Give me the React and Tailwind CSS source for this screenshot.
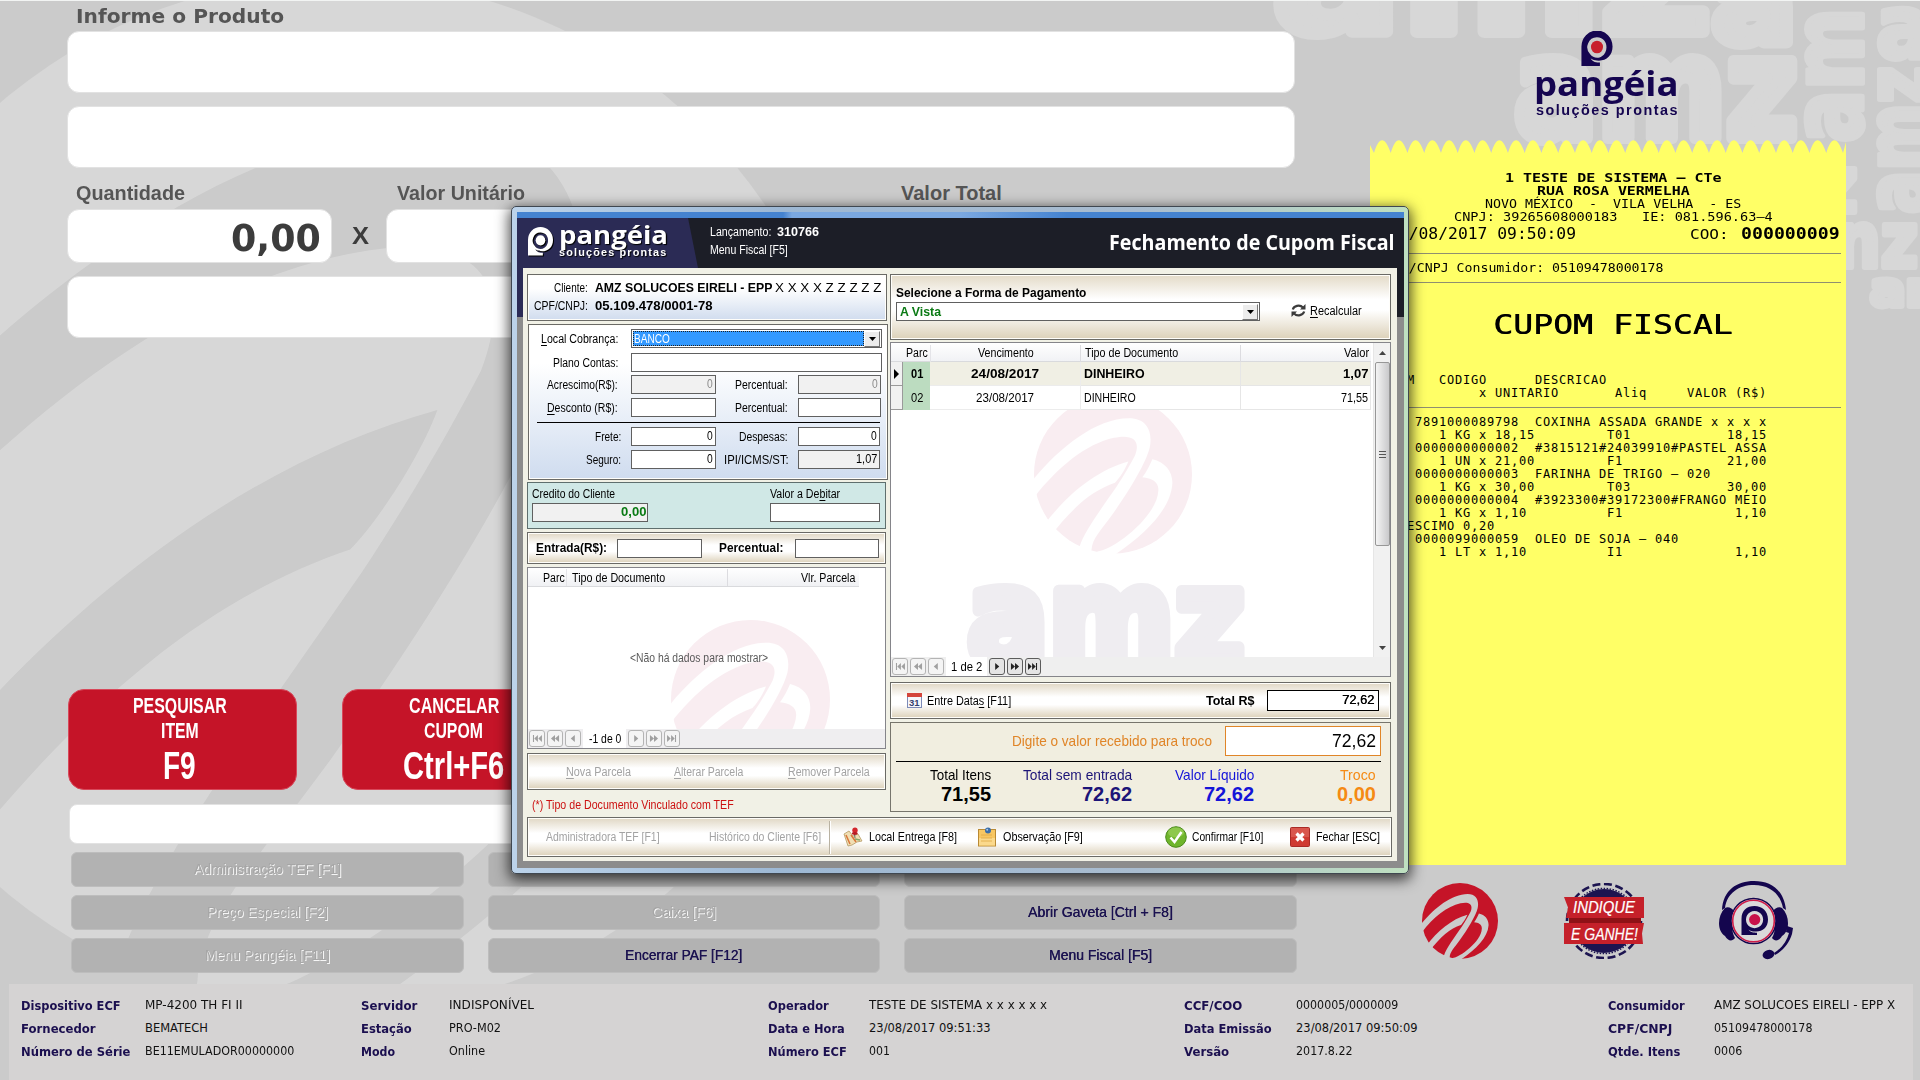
import React, { useLayoutEffect, useRef, useState } from "react";

/* Text set to a fixed width: the glyphs are condensed or widened to fill it. */
function T({ w, className = "", children }) {
  const ref = useRef(null);
  const [k, setK] = useState(1);
  useLayoutEffect(() => {
    const n = ref.current.offsetWidth;
    if (n) setK(w / n);
  }, [w]);
  return (
    <span className={"inline-block shrink-0 whitespace-pre " + className} style={{ width: w }}>
      <span ref={ref} className="inline-block origin-left" style={{ transform: `scaleX(${k})` }}>
        {children}
      </span>
    </span>
  );
}

const U = ({ children }) => <span className="underline underline-offset-2">{children}</span>;

/* Round AMZ emblem with three swooshes cut out of the disc. */
function Emblem({ id, className }) {
  return (
    <svg viewBox="15 -15 474 474" className={className} fill="currentColor">
      <mask id={id}>
        <rect x="0" y="-30" width="520" height="520" fill="white" />
        <path
          fill="black"
          d="M-10 265C70 160 190 53 300 53C355 53 372 95 362 142C350 190 300 272 250 342C215 390 190 415 188 445L182 480L140 475L152 437C165 395 220 320 263 258C285 225 305 190 318 165C336 118 310 100 255 112C170 130 80 205 10 298Z
          M40 380C110 285 200 210 298 183C290 205 270 235 258 247C190 270 130 320 60 413Z
          M370 176C410 185 432 215 430 250C425 330 340 410 240 474L200 470L205 453C250 450 385 350 388 270C390 245 370 233 340 230C352 215 362 195 370 176Z"
        />
      </mask>
      <circle cx="252" cy="222" r="237" mask={`url(#${id})`} />
    </svg>
  );
}

function Backdrop() {
  return (
    <div className="absolute inset-0 overflow-hidden bg-[#cbcbcb] text-[#d7d7d7]">
      <Emblem id="bgm" className="absolute -left-[180px] -top-[22px] h-[1034px] w-[1034px]" />
      <svg
        className="absolute right-0 top-0 h-[330px] w-[680px] font-['DejaVu_Sans'] font-bold"
        viewBox="1240 0 680 330"
        fill="currentColor"
        stroke="currentColor"
        strokeWidth="12"
        strokeLinejoin="round"
      >
        <text x="1272" y="32" fontSize="165" textLength="440" lengthAdjust="spacingAndGlyphs">amz</text>
        <text x="1712" y="42" fontSize="110" textLength="84" lengthAdjust="spacingAndGlyphs">a</text>
        <text x="1514" y="138" fontSize="140" textLength="284" lengthAdjust="spacingAndGlyphs">amz</text>
        <g strokeWidth="6">
          <text transform="translate(1862 143) rotate(-90)" fontSize="98" textLength="135" lengthAdjust="spacingAndGlyphs">am</text>
          <text transform="translate(1928 214) rotate(-90)" fontSize="88" textLength="148" lengthAdjust="spacingAndGlyphs">amz</text>
          <text x="1876" y="58" fontSize="88" textLength="56" lengthAdjust="spacingAndGlyphs">a</text>
          <text x="1835" y="267" fontSize="76" textLength="83" lengthAdjust="spacingAndGlyphs">nz</text>
          <text x="1870" y="306" fontSize="48" textLength="90" lengthAdjust="spacingAndGlyphs">am</text>
          <text x="1816" y="212" fontSize="78" textLength="42" lengthAdjust="spacingAndGlyphs">z</text>
        </g>
      </svg>
      <div className="absolute inset-x-0 top-0 h-px bg-[#f2f4f3]" />
    </div>
  );
}

function PMark({ className, dot = "#c8202c" }) {
  return (
    <svg viewBox="0 0 32 36" className={className}>
      <path
        fill="currentColor"
        fillRule="evenodd"
        d="M0 36V16A16 16.5 0 0 1 32 16C32 25 26 30.5 18 30.5C12 30.5 9.500 28 9.500 28C11 32 16 32.500 19 32.500V36ZM16 6.500A9.800 10.200 0 0 0 9 24C11.500 27.500 17 29 21 26C28 22 28 7 16 6.500Z"
      />
      <ellipse cx="16" cy="16.500" rx="6.200" ry="6.500" fill={dot} />
    </svg>
  );
}

const Field = ({ className = "", children }) => (
  <div className={"flex shrink-0 items-center justify-end rounded-xl border border-[#e2e2e2] bg-white " + className}>{children}</div>
);

function RedButton({ lines }) {
  return (
    <div className="flex h-[101px] w-[229px] shrink-0 flex-col items-center rounded-2xl border border-[#d8485a] bg-[#c51428] pt-[3px] pr-[6px] text-white">
      {lines.map(([t, w], i) => (
        <T key={t} w={w} className={i === 2 ? "h-[46px] text-[39px] leading-[46px] font-bold" : "h-[25px] text-[22px] leading-[25px] font-bold"}>
          {t}
        </T>
      ))}
    </div>
  );
}

function GrayButton({ w, off, children }) {
  return (
    <div className="flex h-[35px] items-center justify-center rounded-md border border-[#bdbdbd] bg-[#b2b2b2]">
      {children && (
        <T
          w={w}
          className={
            off
              ? "text-[15px] text-[#a6a6a6] [text-shadow:1px_1px_0_#f6f6f6]"
              : "text-[15px] text-[#1b1250] [text-shadow:0.4px_0_0_#1b1250]"
          }
        >
          {children}
        </T>
      )}
    </div>
  );
}

function Left() {
  return (
    <div className="w-[1370px] shrink-0 pl-[67px] text-[#555]">
      <div className="flex h-[31px] items-center pl-[9px]">
        <T w={208} className="font-['DejaVu_Sans'] text-[20px] font-bold">Informe o Produto</T>
      </div>
      <Field className="h-[62px] w-[1228px]" />
      <Field className="mt-[13px] h-[62px] w-[1228px]" />
      <div className="mt-[16px] mb-[7px] flex h-[18px] items-center pl-[9px] text-[20px] font-bold">
        <T w={109}>Quantidade</T>
        <T w={128} className="ml-[212px]">Valor Unitário</T>
        <T w={101} className="ml-[376px]">Valor Total</T>
      </div>
      <div className="flex items-center">
        <Field className="h-[54px] w-[265px] pr-[10px] text-[#3c3c3c]">
          <T w={90} className="pt-[3px] font-['DejaVu_Sans'] text-[38px] leading-none font-bold">0,00</T>
        </Field>
        <T w={17} className="ml-[20px] text-[24px] font-bold text-[#3c3c3c]">X</T>
        <Field className="ml-[17px] h-[54px] w-[264px]" />
      </div>
      <Field className="mt-[13px] h-[62px] w-[1228px]" />
      <div className="mt-[351px] ml-px flex gap-[45px]">
        <RedButton lines={[["PESQUISAR", 94], ["ITEM", 38], ["F9", 33]]} />
        <RedButton lines={[["CANCELAR", 90], ["CUPOM", 59], ["Ctrl+F6", 101]]} />
      </div>
      <div className="mt-[14px] ml-[2px] h-[40px] w-[1226px] rounded-lg border border-[#e2e2e2] bg-white" />
      <div className="mt-[8px] ml-[4px] grid w-[1226px] grid-cols-3 gap-x-[24px] gap-y-[8px]">
        <GrayButton off w={147}>Administração TEF [F1]</GrayButton>
        <GrayButton />
        <GrayButton />
        <GrayButton off w={121}>Preço Especial [F2]</GrayButton>
        <GrayButton off w={64}>Caixa [F6]</GrayButton>
        <GrayButton w={145}>Abrir Gaveta [Ctrl + F8]</GrayButton>
        <GrayButton off w={125}>Menu Pangéia [F11]</GrayButton>
        <GrayButton w={117}>Encerrar PAF [F12]</GrayButton>
        <GrayButton w={103}>Menu Fiscal [F5]</GrayButton>
      </div>
    </div>
  );
}

const TEETH = (() => {
  let d = "M0 14V5L4 13";
  for (let i = 0; i < 28; i++) {
    const x = 4 + i * 16.75;
    d += `C${x + 5} -4 ${x + 11} -4 ${x + 16.75} 13`;
  }
  return d + "L476 2V14Z";
})();

const ITEMS = `    7891000089798  COXINHA ASSADA GRANDE x x x x
       1 KG x 18,15         T01            18,15
    0000000000002  #3815121#24039910#PASTEL ASSA
       1 UN x 21,00         F1             21,00
    0000000000003  FARINHA DE TRIGO – 020
       1 KG x 30,00         T03            30,00
    0000000000004  #3923300#39172300#FRANGO MEIO
       1 KG x 1,10          F1              1,10
ACRESCIMO 0,20
    0000099000059  OLEO DE SOJA – 040
       1 LT x 1,10          I1              1,10`;

const HEAD = `ITEM   CODIGO      DESCRICAO
            x UNITARIO       Aliq     VALOR (R$)`;

function Receipt() {
  return (
    <div className="h-[725px] w-[476px] font-['DejaVu_Sans_Mono'] text-black">
      <svg viewBox="0 0 476 13" className="block h-[13px] w-[476px]">
        <path d={TEETH} fill="#ffff66" />
      </svg>
      <div className="h-[712px] bg-[#ffff66] pt-[19px]">
        <div className="flex flex-col items-center text-[12px] leading-[13px] *:h-[13px]">
          <T w={216} className="ml-[10px] font-bold">1 TESTE DE SISTEMA – CTe</T>
          <T w={153} className="ml-[11px] font-bold">RUA ROSA VERMELHA</T>
          <T w={256} className="ml-[10px]">{"NOVO MÉXICO  -  VILA VELHA  - ES"}</T>
          <T w={319} className="ml-[10px]">{"CNPJ: 39265608000183   IE: 081.596.63–4"}</T>
        </div>
        <div className="flex h-[20px] items-center pl-[19px] leading-[20px]">
          <T w={187} className="text-[16px]">23/08/2017 09:50:09</T>
          <T w={39} className="ml-[114px] text-[14px]">COO:</T>
          <T w={99} className="ml-[12px] text-[16px] font-bold">000000009</T>
        </div>
        <div className="mt-[9px] mr-[5px] ml-[10px] h-px bg-[#8f8f70]" />
        <div className="flex h-[28px] items-center pl-[15px]">
          <T w={278} className="text-[12.5px]">CPF/CNPJ Consumidor: 05109478000178</T>
        </div>
        <div className="mr-[5px] ml-[10px] h-px bg-[#8f8f70]" />
        <div className="flex h-[84px] items-center pl-[123px] [text-shadow:0.5px_0_0_#000]">
          <T w={239} className="text-[26.5px]">CUPOM FISCAL</T>
        </div>
        <pre className="mt-[7px] ml-[13px] font-['DejaVu_Sans_Mono'] text-[12px] leading-[13px] tracking-[0.776px]">{HEAD}</pre>
        <div className="mt-[7px] mr-[5px] ml-[10px] h-px bg-[#8f8f70]" />
        <pre className="mt-[8px] ml-[13px] font-['DejaVu_Sans_Mono'] text-[12px] leading-[13px] tracking-[0.776px]">{ITEMS}</pre>
      </div>
    </div>
  );
}

function Indique() {
  return (
    <svg viewBox="0 0 81 76" className="h-[76px] w-[81px]">
      <circle cx="40" cy="38" r="37" fill="none" stroke="#1c1450" strokeWidth="2.600" strokeDasharray="8 3.600" />
      <circle cx="40" cy="38" r="32" fill="#1c1450" />
      <circle cx="40" cy="38" r="32.600" fill="none" stroke="#1c1450" strokeWidth="1.500" strokeDasharray="1.500 1.500" />
      <path d="M5 35H77V42H5Z" fill="#8f1116" />
      <path d="M0 14H80V35H2L4 24.500Z" fill="#c5202a" />
      <path d="M0 40H80L78 50.500L79 61H0Z" fill="#c5202a" />
      <g fill="#fff" fontFamily="Liberation Sans" fontStyle="italic" fontSize="17" stroke="#fff" strokeWidth=".2">
        <text x="9" y="29.500" textLength="62" lengthAdjust="spacingAndGlyphs">INDIQUE</text>
        <text x="7" y="57" textLength="67" lengthAdjust="spacingAndGlyphs">E GANHE!</text>
      </g>
    </svg>
  );
}

function Headset() {
  return (
    <svg viewBox="0 0 75 79" className="h-[79px] w-[75px] text-[#14064e]" fill="currentColor">
      <path d="M3 29C4 9 18 0 35 0S65 9 67 29L64 27C61 12 50 4 35 4S8 12 6 27Z" />
      <path d="M6 27C9 25 13 27 16 31C12 39 12 50 16 57C13 61 9 60 6 55C-2 50-2 35 6 27Z" />
      <path d="M63 27C60 25 56 27 53 31C57 39 57 50 53 57C56 61 60 60 63 55C71 50 71 35 63 27Z" />
      <circle cx="34.500" cy="40" r="22.500" fill="#dadada" stroke="#14064e" strokeWidth="1.500" />
      <circle cx="34.500" cy="40" r="20.800" fill="none" stroke="#cf1c48" strokeWidth="1.600" />
      <path
        fillRule="evenodd"
        d="M22.500 54V38C22.500 29 28 25 35.500 25S49 30 49 38.500S43 51 36 50.500C33 50.500 31 50 29.500 48.500C31 51.500 35 51.500 38 51.800V54ZM35.500 30A8.600 8.600 0 1 0 35.600 30Z"
      />
      <circle cx="35.700" cy="38.600" r="5.600" fill="#c8104a" />
      <path d="M68 45L74 47L73 53C70 62 65 69 56 74L55 72C63 67 68 60 70 52L67 51Z" />
      <ellipse cx="49.500" cy="73.500" rx="6" ry="4.500" transform="rotate(-18 49.500 73.500)" />
    </svg>
  );
}

function Right() {
  return (
    <div className="w-[550px]">
      <div className="flex h-[140px] w-[476px] flex-col items-center pt-[31px] text-[#150550]">
        <PMark className="-ml-[22px] h-[35px] w-[32px]" />
        <T w={145} className="-ml-[3px] h-[35px] font-['Open_Sans'] text-[34px] leading-[35px] font-bold">pangéia</T>
        <T w={143} className="-ml-[2px] h-[18px] text-[14.5px] leading-[18px] font-bold tracking-[1.5px]">soluções prontas</T>
      </div>
      <Receipt />
      <div className="flex items-center pt-[16px] pl-[52px] text-[#c51428]">
        <Emblem id="em" className="h-[76px] w-[76px]" />
        <div className="ml-[66px]"><Indique /></div>
        <div className="ml-[74px]"><Headset /></div>
      </div>
    </div>
  );
}

const FOOT = [
  ["pl-[12px]", "w-[124px]", [["Dispositivo ECF", 100, "MP-4200 TH FI II", 97], ["Fornecedor", 75, "BEMATECH", 63], ["Número de Série", 109, "BE11EMULADOR00000000", 149]], "w-[352px]"],
  ["", "w-[88px]", [["Servidor", 56, "INDISPONÍVEL", 85], ["Estação", 51, "PRO-M02", 52], ["Modo", 34, "Online", 36]], "w-[407px]"],
  ["", "w-[101px]", [["Operador", 61, "TESTE DE SISTEMA x x x x x x", 178], ["Data e Hora", 77, "23/08/2017 09:51:33", 122], ["Número ECF", 79, "001", 21]], "w-[416px]"],
  ["", "w-[112px]", [["CCF/COO", 58, "0000005/0000009", 102], ["Data Emissão", 88, "23/08/2017 09:50:09", 122], ["Versão", 45, "2017.8.22", 57]], "w-[424px]"],
  ["", "w-[106px]", [["Consumidor", 77, "AMZ SOLUCOES EIRELI - EPP X", 181], ["CPF/CNPJ", 64, "05109478000178", 98], ["Qtde. Itens", 72, "0006", 28]], "w-[300px]"],
];

function Footer() {
  return (
    <div className="mr-[7px] ml-[9px] flex h-[96px] bg-[#d5d3d3] pt-[10px] font-['DejaVu_Sans'] text-[12px]">
      {FOOT.map(([pl, lw, rows, cw], i) => (
        <div key={i} className={`shrink-0 ${pl} ${cw}`}>
          {rows.map(([l, a, v, b]) => (
            <div key={l} className="flex h-[23px] items-center">
              <div className={`flex shrink-0 text-[#1b0f4f] ${lw}`}><T w={a} className="font-bold">{l}</T></div>
              <T w={b} className="text-[11.5px] text-[#111]">{v}</T>
            </div>
          ))}
        </div>
      ))}
    </div>
  );
}

/* ---------- dialog ---------- */

const Panel = ({ className = "", children }) => (
  <div className={"flex shrink-0 items-center border border-[#6a6a66] shadow-[inset_0_0_0_1px_#fffefa] " + className}>{children}</div>
);
const BEIGE = "bg-[linear-gradient(#e0d7c4,#fff_40%,#fff_62%,#dcd1b9)] ";

const Input = ({ className = "", children }) => (
  <div className={"flex h-[19px] shrink-0 items-center justify-end border border-[#606060] pr-[2px] pb-px " + className}>{children}</div>
);

const DropArrow = () => (
  <div className="flex h-[16px] w-[16px] shrink-0 items-center justify-center border border-t-white border-r-[#777] border-b-[#777] border-l-white bg-[#ececec]">
    <svg viewBox="0 0 7 4" className="h-[4px] w-[7px]"><path d="M0 0H7L3.500 4Z" /></svg>
  </div>
);

const NAV = {
  first: "M2 1V9H3.200V1ZM7.500 1V9L3.500 5ZM12 1V9L8 5Z",
  rew: "M6.500 1V9L2 5ZM11 1V9L6.500 5Z",
  prev: "M8.500 1V9L4 5Z",
  next: "M4.500 1V9L9 5Z",
  fwd: "M2 1V9L6.500 5ZM6.500 1V9L11 5Z",
  last: "M1 1V9L5 5ZM5.500 1V9L9.500 5ZM9.800 1V9H11V1Z",
};
const NavBtn = ({ k, on }) => (
  <div
    className={
      "flex h-[17px] w-[16px] items-center justify-center rounded-[3px] border " +
      (on ? "border-[#5c5c5c] bg-[#e4e4e4] text-[#222]" : "border-[#b4b4b4] bg-[#f4f4f4] text-[#a0a0a0]")
    }
  >
    <svg viewBox="0 0 13 10" className="h-[9px] w-[12px]" fill="currentColor"><path d={NAV[k]} /></svg>
  </div>
);

function LeftPanels() {
  return (
    <div className="flex w-[360px] flex-col text-[12px]">
      <Panel className="h-[47px] w-[360px] bg-gradient-to-b from-white from-30% to-[#d0dcee]">
        <div className="-mt-[2px] leading-[18px]">
          <div className="flex h-[18px] items-center">
            <T w={34} className="ml-[26px]">Cliente:</T>
            <T w={177} className="ml-[7px] font-bold">AMZ SOLUCOES EIRELI - EPP</T>
            <T w={106} className="ml-[3px]">X X X X Z Z Z Z Z</T>
          </div>
          <div className="flex h-[18px] items-center">
            <T w={54} className="ml-[6px]">CPF/CNPJ:</T>
            <T w={117} className="ml-[7px] font-bold">05.109.478/0001-78</T>
          </div>
        </div>
      </Panel>
      <Panel className="mt-[3px] ml-px h-[156px] w-[360px] bg-gradient-to-b from-white from-25% to-[#cfdcef]">
        <div className="w-full self-start">
          <div className="mt-[4px] flex h-[19px] items-center">
            <T w={77} className="ml-[12px]"><U>L</U>ocal Cobrança:</T>
            <div className="ml-[13px] flex h-[19px] w-[251px] items-center border border-[#606060] bg-white p-px">
              <div className="flex h-[15px] grow items-center border border-dotted border-[#222] bg-[#3399ff] text-white"><T w={36}>BANCO</T></div>
              <DropArrow />
            </div>
          </div>
          <div className="mt-[5px] flex h-[19px] items-center">
            <T w={65} className="ml-[24px]">Plano Contas:</T>
            <Input className="ml-[13px] w-[251px] bg-white" />
          </div>
          <div className="mt-[3px] flex h-[19px] items-center">
            <T w={71} className="ml-[18px]">Acrescimo(R$):</T>
            <Input className="ml-[13px] w-[85px] bg-[#f1f1f1] text-[#8a8a8a]"><T w={6}>0</T></Input>
            <T w={53} className="ml-[19px]">Percentual:</T>
            <Input className="ml-[10px] w-[83px] bg-[#f1f1f1] text-[#8a8a8a]"><T w={6}>0</T></Input>
          </div>
          <div className="mt-[4px] flex h-[19px] items-center">
            <T w={71} className="ml-[18px]"><U>D</U>esconto (R$):</T>
            <Input className="ml-[13px] w-[85px] bg-white" />
            <T w={53} className="ml-[19px]">Percentual:</T>
            <Input className="ml-[10px] w-[83px] bg-white" />
          </div>
          <div className="mt-[5px] ml-[8px] h-px w-[343px] bg-black" />
          <div className="mt-[4px] flex h-[19px] items-center">
            <T w={26} className="ml-[66px]">Frete:</T>
            <Input className="ml-[10px] w-[85px] bg-white"><T w={6}>0</T></Input>
            <T w={49} className="ml-[23px]">Despesas:</T>
            <Input className="ml-[10px] w-[82px] bg-white"><T w={6}>0</T></Input>
          </div>
          <div className="mt-[4px] flex h-[19px] items-center">
            <T w={35} className="ml-[57px]">Seguro:</T>
            <Input className="ml-[10px] w-[85px] bg-white"><T w={6}>0</T></Input>
            <T w={65} className="ml-[8px]">IPI/ICMS/ST:</T>
            <Input className="ml-[9px] w-[82px] bg-[#f1f1f1]"><T w={21}>1,07</T></Input>
          </div>
        </div>
      </Panel>
      <div className="mt-[2px] flex h-[47px] w-[359px] items-start justify-between border border-[#5f6f6e] bg-[#d0e8e6] pt-[2px] pr-[5px] pl-[4px]">
        <div>
          <div className="flex h-[18px] items-center"><T w={83}>Credito do Cliente</T></div>
          <Input className="w-[116px] bg-[#f1f1f1] pr-px pb-[3px] font-bold text-[#0a7a14]"><T w={25}>0,00</T></Input>
        </div>
        <div>
          <div className="flex h-[18px] items-center"><T w={70}>Valor a De<U>b</U>itar</T></div>
          <Input className="w-[110px] bg-white" />
        </div>
      </div>
      <Panel className={"mt-[3px] h-[32px] w-[359px] font-bold " + BEIGE}>
        <T w={71} className="ml-[8px]"><U>E</U>ntrada(R$):</T>
        <Input className="ml-[10px] w-[85px] bg-white" />
        <T w={64} className="ml-[17px]">Percentual:</T>
        <Input className="ml-[12px] w-[84px] bg-white" />
      </Panel>
      <div className="relative mt-[3px] flex h-[182px] w-[359px] flex-col overflow-hidden border border-[#85858a] bg-white">
        <Emblem id="wl" className="absolute top-[52px] left-[143px] h-[159px] w-[159px] text-[#f9edf1]" />
        <div className="flex h-[19px] w-[331px] items-center border-b border-[#d9dadd] bg-gradient-to-b from-white to-[#f0f1f4] pt-px">
          <T w={22} className="ml-[15px]">Parc</T>
          <div className="ml-[1px] h-[17px] w-px bg-[#e4e4e8]" />
          <T w={93} className="ml-[5px]">Tipo de Documento</T>
          <div className="ml-[62px] h-[17px] w-px bg-[#dcdce0]" />
          <T w={54} className="ml-[73px]">Vlr. Parcela</T>
        </div>
        <div className="relative flex grow pt-[62px] pl-[102px] text-[#5a5a5a]"><T w={138}>{"<Não há dados para mostrar>"}</T></div>
        <div className="relative flex h-[19px] items-center gap-[2px] bg-[#efeef0] pl-px">
          <NavBtn k="first" /><NavBtn k="rew" /><NavBtn k="prev" />
          <div className="flex h-[19px] w-[43px] items-center justify-center bg-white"><T w={32}>-1 de 0</T></div>
          <NavBtn k="next" /><NavBtn k="fwd" /><NavBtn k="last" />
        </div>
      </div>
      <Panel className={"mt-[4px] h-[37px] w-[359px] text-[#a3a3a3] " + BEIGE}>
        <T w={65} className="ml-[38px] pt-px"><U>N</U>ova Parcela</T>
        <T w={69} className="ml-[43px] pt-px"><U>A</U>lterar Parcela</T>
        <T w={82} className="ml-[45px] pt-px"><U>R</U>emover Parcela</T>
      </Panel>
      <div className="flex h-[27px] items-center pt-[3px] pl-[5px] text-[#cc1111]">
        <T w={202}>(*) Tipo de Documento Vinculado com TEF</T>
      </div>
    </div>
  );
}

const GridRow = ({ bold, p, v, val, pw, vw, dw, lw }) => (
  <div className={"flex h-[24px] w-[480px] shrink-0 items-center " + (bold ? "bg-[#f0efe4] font-bold" : "bg-white")}>
    <div className="flex h-[24px] w-[12px] items-center justify-center border-r border-b border-[#9a9a9a] bg-[#f1f1f1]">
      {bold && <svg viewBox="0 0 5 10" className="h-[10px] w-[5px]"><path d="M0 0V10L5 5Z" /></svg>}
    </div>
    <div className="flex h-[24px] w-[27px] items-center justify-center bg-[#bcdcc0]"><T w={pw}>{p}</T></div>
    <div className="flex h-[24px] w-[151px] items-center justify-center border-r border-b border-[#ececec]"><T w={vw}>{v}</T></div>
    <div className="flex h-[24px] w-[160px] items-center border-r border-b border-[#e6e6e6] pl-[3px]"><T w={dw}>DINHEIRO</T></div>
    <div className="flex h-[24px] w-[130px] items-center justify-end border-r border-b border-[#e6e6e6] pr-[2px]"><T w={lw}>{val}</T></div>
  </div>
);

const CalendarIcon = () => (
  <svg viewBox="0 0 15 15" className="h-[15px] w-[15px] shrink-0">
    <rect x=".5" y=".5" width="14" height="14" fill="#f6f7fb" stroke="#7d8bb8" />
    <rect width="15" height="4" fill="#d4453c" />
    <text x="2" y="12.500" fontSize="9.500" fontWeight="bold" fontFamily="Liberation Sans" fill="#33416e">31</text>
  </svg>
);

const RefreshIcon = () => (
  <svg viewBox="0 0 15 13" className="h-[13px] w-[15px] shrink-0" fill="none" stroke="#3b3b3b" strokeWidth="2.200">
    <path d="M1.800 5.500C2.800 2 8.500 0 12 3.500" />
    <path d="M13.200 7.500C12.200 11 6.500 13 3 9.500" />
    <path d="M14.500 0V5.500H9Z" fill="#3b3b3b" stroke="none" />
    <path d="M.5 13V7.500H6Z" fill="#3b3b3b" stroke="none" />
  </svg>
);

function RightPanels() {
  return (
    <div className="flex w-[501px] flex-col text-[12px]">
      <Panel className="h-[66px] w-[501px] bg-[linear-gradient(#e3dac7,#fff_38%,#fff_55%,#dcd1b9)]">
        <div className="-mt-[9px] ml-[5px]">
          <div className="flex h-[18px] items-center"><T w={190} className="font-bold">Selecione a Forma de Pagamento</T></div>
          <div className="flex h-[19px] w-[364px] items-center justify-between border border-[#606060] bg-white pr-px pl-[3px]">
            <T w={41} className="font-bold text-[#0a7a14]">A Vista</T>
            <DropArrow />
          </div>
        </div>
        <div className="mt-[7px] ml-[31px] flex items-center">
          <RefreshIcon />
          <T w={52} className="ml-[4px]"><U>R</U>ecalcular</T>
        </div>
      </Panel>
      <div className="relative mt-[2px] flex h-[335px] w-[501px] flex-col overflow-hidden border border-[#85858a] bg-white">
        <Emblem id="wr" className="absolute top-[52px] left-[143px] h-[159px] w-[158px] text-[#f9edf1]" />
        <svg viewBox="0 0 292 92" className="absolute top-[235px] left-[68px] h-[92px] w-[292px] text-[#efedf1]" fill="currentColor" stroke="currentColor" strokeWidth="12" strokeLinejoin="round">
          <text x="8" y="86" fontSize="134" fontFamily="DejaVu Sans" fontWeight="bold" textLength="278" lengthAdjust="spacingAndGlyphs">amz</text>
        </svg>
        <div className="relative flex grow">
          <div className="w-[482px]">
            <div className="flex h-[19px] w-[480px] items-center border-b border-[#d9dadd] bg-gradient-to-b from-white to-[#f1f2f5] pt-[2px]">
              <T w={22} className="ml-[15px]">Parc</T>
              <div className="ml-[2px] h-[17px] w-px bg-[#e4e4e8]" />
              <T w={56} className="ml-[47px]">Vencimento</T>
              <div className="ml-[46px] h-[17px] w-px bg-[#dcdce0]" />
              <T w={93} className="ml-[4px]">Tipo de Documento</T>
              <div className="ml-[62px] h-[17px] w-px bg-[#dcdce0]" />
              <T w={25} className="ml-[103px]">Valor</T>
            </div>
            <GridRow bold p="01" pw={12} v="24/08/2017" vw={68} dw={61} val="1,07" lw={25} />
            <GridRow p="02" pw={12} v="23/08/2017" vw={58} dw={52} val="71,55" lw={27} />
          </div>
          <div className="flex w-[17px] flex-col items-center border-l border-[#e6e6e6] bg-[#f1f1f1]">
            <svg viewBox="0 0 7 4" className="mt-[8px] h-[4px] w-[7px]"><path d="M0 4H7L3.500 0Z" fill="#444" /></svg>
            <div className="mt-[7px] flex h-[184px] w-[15px] flex-col items-center justify-center gap-[2px] rounded-[2px] border border-[#979797] bg-gradient-to-r from-[#f4f4f4] to-[#c9c9cb]">
              <div className="h-px w-[7px] bg-[#555]" /><div className="h-px w-[7px] bg-[#555]" /><div className="h-px w-[7px] bg-[#555]" />
            </div>
            <svg viewBox="0 0 7 4" className="mt-auto mb-[7px] h-[4px] w-[7px]"><path d="M0 0H7L3.500 4Z" fill="#444" /></svg>
          </div>
        </div>
        <div className="relative flex h-[19px] items-center gap-[2px] bg-[#efefef] pl-px">
          <NavBtn k="first" /><NavBtn k="rew" /><NavBtn k="prev" />
          <div className="flex h-[19px] w-[41px] items-center justify-center bg-white"><T w={31}>1 de 2</T></div>
          <NavBtn k="next" on /><NavBtn k="fwd" on /><NavBtn k="last" on />
        </div>
      </div>
      <Panel className={"mt-[5px] h-[37px] w-[501px] " + BEIGE}>
        <div className="ml-[16px] flex"><CalendarIcon /></div>
        <T w={84} className="ml-[5px]">Entre Data<U>s</U> [F11]</T>
        <T w={48} className="ml-[195px] font-bold">Total R$</T>
        <div className="ml-[13px] flex h-[21px] w-[112px] items-center justify-end border border-black bg-white pr-[4px] pb-px">
          <T w={32} className="text-[12.5px] [text-shadow:0.4px_0_0_#000]">72,62</T>
        </div>
      </Panel>
      <div className="mt-[3px] h-[90px] w-[501px] border border-[#77756c] bg-[#f1eee0]">
        <div className="mt-[3px] flex h-[30px] items-center text-[#e08528]">
          <T w={200} className="ml-[121px] pt-px text-[15px]">Digite o valor recebido para troco</T>
          <div className="ml-[13px] flex h-[30px] w-[156px] items-center justify-end border border-[#e08528] bg-white pr-[4px] text-black">
            <T w={44} className="text-[18px]">72,62</T>
          </div>
        </div>
        <div className="mt-[5px] ml-[5px] h-px w-[485px] bg-black" />
        <div className="mt-[4px] ml-px flex text-[14.5px] leading-[18px] *:flex *:flex-col *:items-end">
          <div className="w-[99px]"><T w={61} className="h-[18px]">Total Itens</T><T w={50} className="h-[20px] text-[20px] leading-[20px] font-bold">71,55</T></div>
          <div className="w-[141px] text-[#1c1478]"><T w={109} className="h-[18px]">Total sem entrada</T><T w={50} className="h-[20px] text-[20px] leading-[20px] font-bold">72,62</T></div>
          <div className="w-[122px] text-[#1414d8]"><T w={79} className="h-[18px]">Valor Líquido</T><T w={50} className="h-[20px] text-[20px] leading-[20px] font-bold">72,62</T></div>
          <div className="w-[122px] text-[#f58a14]"><T w={36} className="h-[18px]">Troco</T><T w={39} className="h-[20px] text-[20px] leading-[20px] font-bold">0,00</T></div>
        </div>
      </div>
    </div>
  );
}

const MapIcon = () => (
  <svg viewBox="0 0 20 20" className="h-[20px] w-[20px] shrink-0">
    <path d="M1 7L6 4L10 9L15 7L19 14L14 15L9 18L5 19Z" fill="#f0dfb4" stroke="#b59a63" strokeWidth=".8" />
    <path d="M3 8L7 17M8 8L13 15" stroke="#d9773a" strokeWidth="1.500" />
    <path d="M12 12L17 13" stroke="#86a86a" strokeWidth="1.500" />
    <path d="M11.500 7L12 11" stroke="#666" />
    <circle cx="12" cy="3.200" r="2.700" fill="#d3262c" />
    <ellipse cx="11.800" cy="6.500" rx="3" ry="1.400" fill="#b81b22" />
  </svg>
);
const NoteIcon = () => (
  <svg viewBox="0 0 18 20" className="h-[20px] w-[18px] shrink-0">
    <rect x=".5" y="2.500" width="17" height="16.500" fill="#f8c763" stroke="#b98a35" />
    <path d="M1 11H17V18.500H1Z" fill="#fbd98c" />
    <path d="M3 8H14M3 11H14M3 14H14" stroke="#e0a845" strokeWidth=".8" />
    <circle cx="10" cy="3.500" r="3" fill="#3c6ea8" />
    <circle cx="9.200" cy="2.700" r="1" fill="#a9c8e8" />
  </svg>
);
const OkIcon = () => (
  <svg viewBox="0 0 22 22" className="h-[22px] w-[22px] shrink-0">
    <circle cx="11" cy="11" r="10.300" fill="#6fb52c" stroke="#4c8a1c" />
    <ellipse cx="11" cy="6.500" rx="8" ry="5" fill="#9ad05a" opacity=".7" />
    <path d="M5.500 11.500L9.500 16L16.500 6" fill="none" stroke="#fff" strokeWidth="2.500" />
  </svg>
);
const CloseIcon = () => (
  <svg viewBox="0 0 20 20" className="h-[20px] w-[20px] shrink-0">
    <rect x=".5" y=".5" width="19" height="19" rx="1" fill="#cf3a32" stroke="#a92a26" />
    <rect x="1" y="1" width="18" height="9" fill="#dd6258" opacity=".7" />
    <path d="M6.500 6.500L13.500 13.500M13.500 6.500L6.500 13.500" stroke="#fff" strokeWidth="3.200" />
  </svg>
);

function Dialog() {
  return (
    <div className="absolute top-[206px] left-[511px] h-[668px] w-[898px] rounded-[5px] border border-[#3f4750] bg-[linear-gradient(90deg,#bcd3ea,#9db8d4_30%,#a9bccf_70%,#bfe0c0)] p-[5px] pr-[4px] text-black shadow-[0_4px_14px_2px_rgba(0,0,0,0.7)]">
      <div className="flex h-full flex-col bg-[#8c8c8c]">
        <div className="h-[6px] bg-[linear-gradient(90deg,#4583d0_30%,#7ba8e0_31%,#7ba8e0_50%,#4583d0_62%)]" />
        <div className="flex h-[50px] bg-[#1c1e27] text-white">
          <div className="flex h-[50px] w-[181px] items-start bg-[#2b2b55] pl-[11px] [clip-path:polygon(0_0,94.500%_0,100%_100%,0_100%)]">
            <PMark dot="#fff" className="mt-[9px] h-[29px] w-[25px] drop-shadow-[1px_1px_0_#000]" />
            <div className="ml-[6px] flex flex-col [text-shadow:1px_1px_1px_#000]">
              <T w={109} className="mt-[4px] h-[24px] font-['Open_Sans'] text-[25px] leading-[24px] font-bold">pangéia</T>
              <T w={108} className="h-[14px] text-[11.5px] leading-[13px] font-bold tracking-[1.2px]">soluções prontas</T>
            </div>
          </div>
          <div className="ml-[12px] pt-[5px] text-[12px] leading-[18px]">
            <div className="flex h-[18px]"><T w={61}>Lançamento:</T><T w={42} className="ml-[6px] font-bold">310766</T></div>
            <div className="flex h-[18px]"><T w={78}>Menu Fiscal [F5]</T></div>
          </div>
          <div className="mr-[9px] ml-auto flex h-[48px] items-center">
            <T w={286} className="font-['Open_Sans'] text-[21px] leading-[30px] font-bold">Fechamento de Cupom Fiscal</T>
          </div>
        </div>
        <div className="flex h-[593px] bg-[linear-gradient(90deg,#2b2b55_50%,#1c1e27_50%)] bg-[length:100%_49px] bg-no-repeat pr-[7px] pl-[6px]">
          <div className="flex w-[874px] flex-col bg-[#f1f1e6] pt-[6px] pl-[4px]">
            <div className="flex gap-[3px]">
              <LeftPanels />
              <RightPanels />
            </div>
            <Panel className={"mt-auto mb-[4px] h-[40px] w-[865px] text-[12px] " + BEIGE}>
              <T w={114} className="ml-[18px] text-[#a3a3a3]">Administradora TEF [F1]</T>
              <T w={112} className="ml-[49px] text-[#a3a3a3]">Histórico do Cliente [F6]</T>
              <div className="ml-[8px] h-[33px] w-[2px] border-r border-l border-r-white border-l-[#b9b2a2]" />
              <div className="ml-[12px] flex"><MapIcon /></div>
              <T w={88} className="ml-[6px]">Local Entrega [F8]</T>
              <div className="ml-[21px] flex"><NoteIcon /></div>
              <T w={80} className="ml-[7px]">Observação [F9]</T>
              <div className="ml-[82px] flex"><OkIcon /></div>
              <T w={71} className="ml-[5px]">Confirmar [F10]</T>
              <div className="ml-[27px] flex"><CloseIcon /></div>
              <T w={64} className="ml-[6px]">Fechar [ESC]</T>
            </Panel>
          </div>
        </div>
      </div>
    </div>
  );
}

export default function App() {
  return (
    <div className="relative h-[1080px] w-[1920px] overflow-hidden font-['Liberation_Sans',sans-serif]">
      <Backdrop />
      <div className="relative">
        <div className="flex h-[984px]">
          <Left />
          <Right />
        </div>
        <Footer />
      </div>
      <Dialog />
    </div>
  );
}
